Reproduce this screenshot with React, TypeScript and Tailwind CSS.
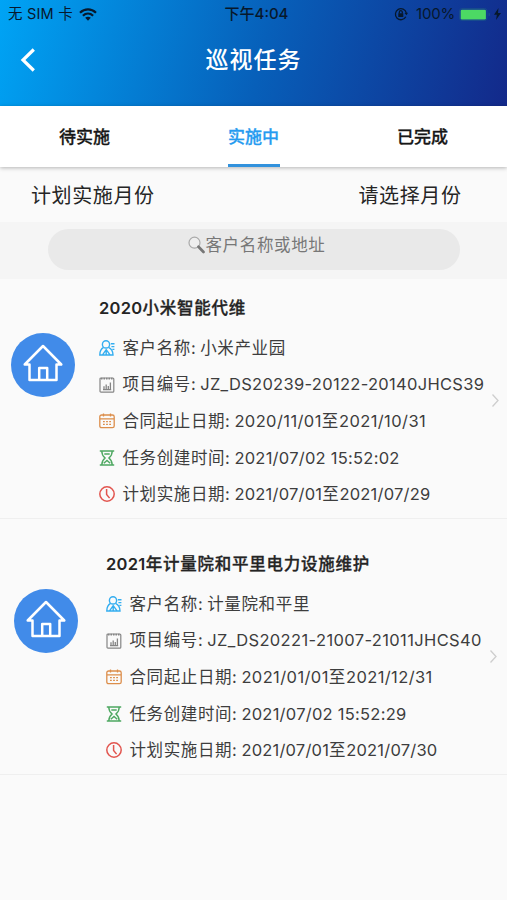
import React from "react";

type Field = { value: string; tracking: string };

type Task = {
  title: string;
  customer: Field;
  code: Field;
  contract: Field;
  created: Field;
  planned: Field;
};

const tasks: Task[] = [
  {
    title: "2020小米智能代维",
    customer: { value: "小米产业园", tracking: "" },
    code: { value: "JZ_DS20239-20122-20140JHCS39", tracking: "tracking-[0.3px]" },
    contract: { value: "2020/11/01至2021/10/31", tracking: "tracking-[0.4px]" },
    created: { value: "2021/07/02 15:52:02", tracking: "tracking-[0.25px]" },
    planned: { value: "2021/07/01至2021/07/29", tracking: "tracking-[0.22px]" },
  },
  {
    title: "2021年计量院和平里电力设施维护",
    customer: { value: "计量院和平里", tracking: "" },
    code: { value: "JZ_DS20221-21007-21011JHCS40", tracking: "tracking-[0.37px]" },
    contract: { value: "2021/01/01至2021/12/31", tracking: "tracking-[0.4px]" },
    created: { value: "2021/07/02 15:52:29", tracking: "tracking-[0.25px]" },
    planned: { value: "2021/07/01至2021/07/30", tracking: "tracking-[0.2px]" },
  },
];

/* Splits mixed text so Chinese and Latin runs carry their own tracking. */
function Mixed({ text, cjk, latin }: { text: string; cjk: string; latin: string }) {
  const runs = text.match(/[\u4e00-\u9fff]+|[^\u4e00-\u9fff]+/g) ?? [];
  return (
    <>
      {runs.map((run, i) => (
        <span key={i} className={/[\u4e00-\u9fff]/.test(run) ? cjk : latin}>
          {run}
        </span>
      ))}
    </>
  );
}

const PersonIcon = () => (
  <svg width="16" height="16" viewBox="0 0 16 16" fill="none" stroke="#35aef0" strokeWidth="1.4">
    <circle cx="7" cy="4.4" r="3.600" />
    <path d="M4.600 7.400C2 8.800.8 11 .8 15h13.200c0-4-1.600-6.200-4.400-7.600M3.700 14.700 7.200 9.700l3.700 5M7.200 9.700v5M11.800 3.800H15.500M12.400 6.600h3M13.400 9.400h2" />
  </svg>
);

const ReportIcon = () => (
  <svg width="16" height="16" viewBox="0 0 16 16" fill="none" stroke="#858585" strokeWidth="1.200">
    <rect x="1" y="1" width="13.800" height="14.200" rx="1" />
    <path d="M2 1.600h12" strokeWidth="1.600" strokeDasharray="1.500 1" />
    <path d="M5 12.500V9.300M7.200 12.500V7.500M9.300 12.500V9M11.400 12.500V5.600M4 12.700h8.200" strokeWidth="1.300" />
  </svg>
);

const CalendarIcon = () => (
  <svg width="16" height="16" viewBox="0 0 16 16" fill="none" stroke="#dc8e4b" strokeWidth="1.300">
    <rect x=".8" y="2" width="14.400" height="12.700" rx="1.800" />
    <path d="M1 5.800h14M4.500.4v3.200M11.500.4v3.200" />
    <path d="M4 8.700h8.500M4 11.300h8.500" strokeDasharray="1.800 1.300" />
  </svg>
);

const HourglassIcon = () => (
  <svg width="16" height="16" viewBox="0 0 16 16" fill="none" stroke="#4ea861" strokeWidth="1.400">
    <path d="M.8 1h14.400M.8 15h14.400M2.800 1.200c0 3.600 1.200 5.100 3.300 6.800-2.100 1.700-3.300 3.300-3.300 6.800M13.200 1.200c0 3.600-1.200 5.100-3.300 6.800 2.100 1.700 3.300 3.300 3.300 6.800M5.300 4h5.400M4.800 13.200 8 10.500l3.200 2.700" />
  </svg>
);

const ClockIcon = () => (
  <svg width="16" height="16" viewBox="0 0 16 16" fill="none" stroke="#e2554f" strokeWidth="1.500">
    <circle cx="8" cy="8" r="7.200" />
    <path d="M7.600 3v5.400l3 3.700" />
  </svg>
);

function Row({ icon, label, field }: { icon: React.ReactNode; label: string; field: Field }) {
  return (
    <div className="flex h-[36.6px] items-center whitespace-nowrap text-[16.5px] text-[#3d3d3d]">
      <span className="w-[23.5px] shrink-0">{icon}</span>
      <span className="mr-[4.5px] shrink-0">
        <Mixed text={label + ":"} cjk="tracking-[0.6px]" latin="" />
      </span>
      <span>
        <Mixed text={field.value} cjk="tracking-[0.65px]" latin={field.tracking} />
      </span>
    </div>
  );
}

function TaskItem({ task, second }: { task: Task; second: boolean }) {
  return (
    <div
      className={
        second
          ? "flex h-[256px] border-b border-[#efefef] pl-[14px] pr-[9px] pt-[27px]"
          : "flex h-[240px] border-b border-[#efefef] pl-[11px] pr-[7px] pt-[11px]"
      }
    >
      <div className="mt-[43px] flex h-16 w-16 shrink-0 items-center justify-center rounded-full bg-[#418be9]">
        <svg width="42" height="42" viewBox="0 0 42 42" fill="none" stroke="white" strokeWidth="2.500" strokeLinejoin="round">
          <path d="M7.500 36V20.500H2.700L21 2l18.300 18.500h-4.800V36ZM17.200 35.500V24h8v11.500" />
        </svg>
      </div>
      <div className={second ? "ml-[28px] min-w-0 flex-1" : "ml-[24px] min-w-0 flex-1"}>
        <div className="flex h-[36px] items-center whitespace-nowrap text-[16.5px] font-semibold text-[#242424]">
          <Mixed text={task.title} cjk="tracking-[0.75px] font-medium [-webkit-text-stroke:0.3px_#242424]" latin="tracking-[0.3px]" />
        </div>
        <div className="mt-[3.8px]">
          <Row icon={<PersonIcon />} label="客户名称" field={task.customer} />
          <Row icon={<ReportIcon />} label="项目编号" field={task.code} />
          <Row icon={<CalendarIcon />} label="合同起止日期" field={task.contract} />
          <Row icon={<HourglassIcon />} label="任务创建时间" field={task.created} />
          <Row icon={<ClockIcon />} label="计划实施日期" field={task.planned} />
        </div>
      </div>
      <svg className="mt-[103px] shrink-0" width="9" height="15" viewBox="0 0 9 15" fill="none" stroke="#cecece" strokeWidth="1.300">
        <path d="m1.500 1.500 5.500 6-5.500 6" />
      </svg>
    </div>
  );
}

export default function App() {
  return (
    <div className="h-[900px] w-[507px] overflow-hidden bg-[#fafafa] font-['Inter','Noto_Sans_CJK_SC',sans-serif]">
      <header className="h-[106px] bg-[linear-gradient(105deg,#00a4f5_0%,#075fb9_52%,#13298a_100%)]">
        <div className="grid h-7 grid-cols-3 items-center text-[15px] text-[#07182c]">
          <div className="flex items-center gap-[6px] pl-[8px]">
            <span className="text-[14.5px] tracking-[0.2px]">无 SIM 卡</span>
            <svg width="18" height="13" viewBox="0 0 18 13" fill="none" stroke="#07182c" strokeWidth="2.200">
              <path d="M1 4.700c4.600-4.500 11.400-4.500 16 0M3.900 7.800c3-2.900 7.200-2.900 10.200 0" />
              <path d="m9 12.800-2.800-3c1.500-1.500 4.100-1.500 5.600 0Z" fill="#07182c" stroke="none" />
            </svg>
          </div>
          <div className="pl-[6px] text-center text-[15px] font-medium">下午4:04</div>
          <div className="flex items-center justify-end pr-[6px]">
            <svg className="mr-[8px]" width="14" height="14" viewBox="0 0 14 14" fill="none" stroke="#07182c" strokeWidth="1.300">
              <path d="M11.800 9.800A5.500 5.500 0 1 1 12.300 6" />
              <path d="m10.500 6 2 2.200L14 5.800Z" fill="#07182c" stroke="none" />
              <rect x="4.300" y="6.300" width="5" height="3.700" fill="#07182c" stroke="none" />
              <path d="M5.300 6.500V5.200a1.500 1.500 0 0 1 3 0v1.300" />
            </svg>
            <span className="tracking-[-0.2px]">100%</span>
            <svg className="ml-[4px]" width="32" height="13" viewBox="0 0 32 13">
              <rect x=".5" y=".5" width="27.500" height="12" rx="2.500" fill="none" stroke="#174b8d" />
              <rect x="1.700" y="1.700" width="25.200" height="9.800" rx="1.200" fill="#4cd964" />
              <path d="M29.500 4.500c2 .5 2 3.500 0 4" fill="#174b8d" />
            </svg>
            <svg className="ml-[3px]" width="7" height="12" viewBox="0 0 7 12">
              <path d="M4.500 0 0 6.800h2.900L2 12l5-7H4Z" fill="#07182c" />
            </svg>
          </div>
        </div>
        <div className="grid h-[64px] grid-cols-[60px_1fr_60px] items-center">
          <svg className="ml-[20px]" width="16" height="26" viewBox="0 0 16 26" fill="none" stroke="white" strokeWidth="3.200">
            <path d="M13.800 2.500 3 13l10.800 10.500" />
          </svg>
          <h1 className="text-center text-[23px] font-medium tracking-[1px] text-white">巡视任务</h1>
        </div>
      </header>
      <nav className="relative grid h-[61px] grid-cols-3 bg-white text-center text-[17px] font-medium leading-[63px] text-[#171717] shadow-[0_1px_4px_rgba(0,0,0,0.28)]">
        <div><span className="[-webkit-text-stroke:0.3px_#171717]">待实施</span></div>
        <div>
          <span className="inline-block h-[61px] border-b-[3px] border-[#3292dd] px-[0.5px] text-[#269bf0] [-webkit-text-stroke:0.3px_#269bf0]">实施中</span>
        </div>
        <div><span className="[-webkit-text-stroke:0.3px_#171717]">已完成</span></div>
      </nav>
      <div className="flex h-[55px] items-center justify-between pl-[31px] pr-[45.5px] pt-[2px] text-[20px] tracking-[0.6px] text-[#252525]">
        <span>计划实施月份</span>
        <span>请选择月份</span>
      </div>
      <div className="flex h-[57px] justify-center bg-[#f5f5f5] pt-[7px]">
        <div className="flex h-[41px] w-[412px] justify-center rounded-full bg-[#e9e9e9] pl-[7px] pt-[4px] text-[16.5px] leading-6 tracking-[0.65px] text-[#777]">
          <svg className="mt-[3px]" width="17" height="18" viewBox="0 0 17 18" fill="none">
            <circle cx="6.500" cy="6.700" r="5.500" fill="#eeeeee" stroke="#a9a9a9" strokeWidth="1.200" />
            <path d="m10.500 10.800 5 5.200" stroke="#777" strokeWidth="2.700" strokeLinecap="round" />
          </svg>
          <span>客户名称或地址</span>
        </div>
      </div>
      <main>
        {tasks.map((task, i) => (
          <TaskItem key={task.title} task={task} second={i === 1} />
        ))}
      </main>
    </div>
  );
}
